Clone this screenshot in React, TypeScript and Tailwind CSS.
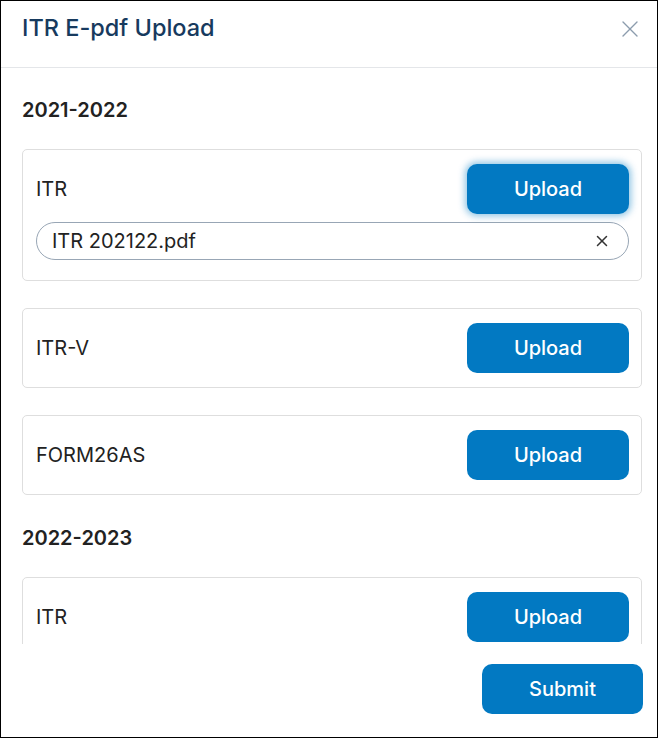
import { X } from "lucide-react";

interface DocRowProps {
  label: string;
  file?: string;
  focused?: boolean;
  className?: string;
}

const UploadButton = ({ focused }: { focused?: boolean }) => (
  <button
    className={
      focused
        ? "w-[162px] h-[50px] rounded-[10px] bg-[#0279c2] text-white text-[20px] font-medium shadow-[0_0_7px_2px_rgba(2,121,194,0.45)]"
        : "w-[162px] h-[50px] rounded-[10px] bg-[#0279c2] text-white text-[20px] font-medium"
    }
  >
    Upload
  </button>
);

const DocRow = ({ label, file, focused, className }: DocRowProps) => (
  <div className={`border border-[#dedede] rounded-[5px] pl-[13px] pr-[12px] pt-[14px] ${file ? "pb-[20px]" : "pb-[14px]"} ${className ?? ""}`}>
    <div className="flex items-center justify-between">
      <span className="text-[20px] text-[#222]">{label}</span>
      <UploadButton focused={focused} />
    </div>
    {file && (
      <div className="mt-[8px] h-[38px] rounded-full border border-[#98a6b5] flex items-center justify-between pl-[15px] pr-[17px]">
        <span className="text-[20px] text-[#222]">{file}</span>
        <X className="w-[18px] h-[18px] text-[#333]" strokeWidth={2} />
      </div>
    )}
  </div>
);

export default function App() {
  return (
    <div
      className="w-[658px] h-[738px] border border-black bg-white flex flex-col overflow-hidden"
      style={{ fontFamily: "Inter, 'Noto Sans', sans-serif" }}
    >
      <div className="h-[67px] shrink-0 border-b border-[#e4e6e9] flex items-start justify-between pl-[21px] pr-[13px] pt-[12px]">
        <h1 className="text-[23.5px] leading-[30px] font-medium text-[#173a5e]">ITR E-pdf Upload</h1>
        <X className="w-[28px] h-[28px] mt-[2px] text-[#8c9cad]" strokeWidth={1.2} />
      </div>

      <div className="flex-1 overflow-hidden pl-[21px] pr-[15px] pt-[28px]">
        <h2 className="text-[20px] leading-[28px] font-semibold text-[#222]">2021-2022</h2>
        <DocRow label="ITR" file="ITR 202122.pdf" focused className="mt-[25px]" />
        <DocRow label="ITR-V" className="mt-[27px]" />
        <DocRow label="FORM26AS" className="mt-[27px]" />
        <h2 className="mt-[29px] text-[20px] leading-[28px] font-semibold text-[#222]">2022-2023</h2>
        <DocRow label="ITR" className="mt-[25px]" />
      </div>

      <div className="h-[93px] shrink-0 flex justify-end items-start pt-[20px] pr-[14px]">
        <button className="w-[161px] h-[50px] rounded-[10px] bg-[#0279c2] text-white text-[20px] font-medium">
          Submit
        </button>
      </div>
    </div>
  );
}
